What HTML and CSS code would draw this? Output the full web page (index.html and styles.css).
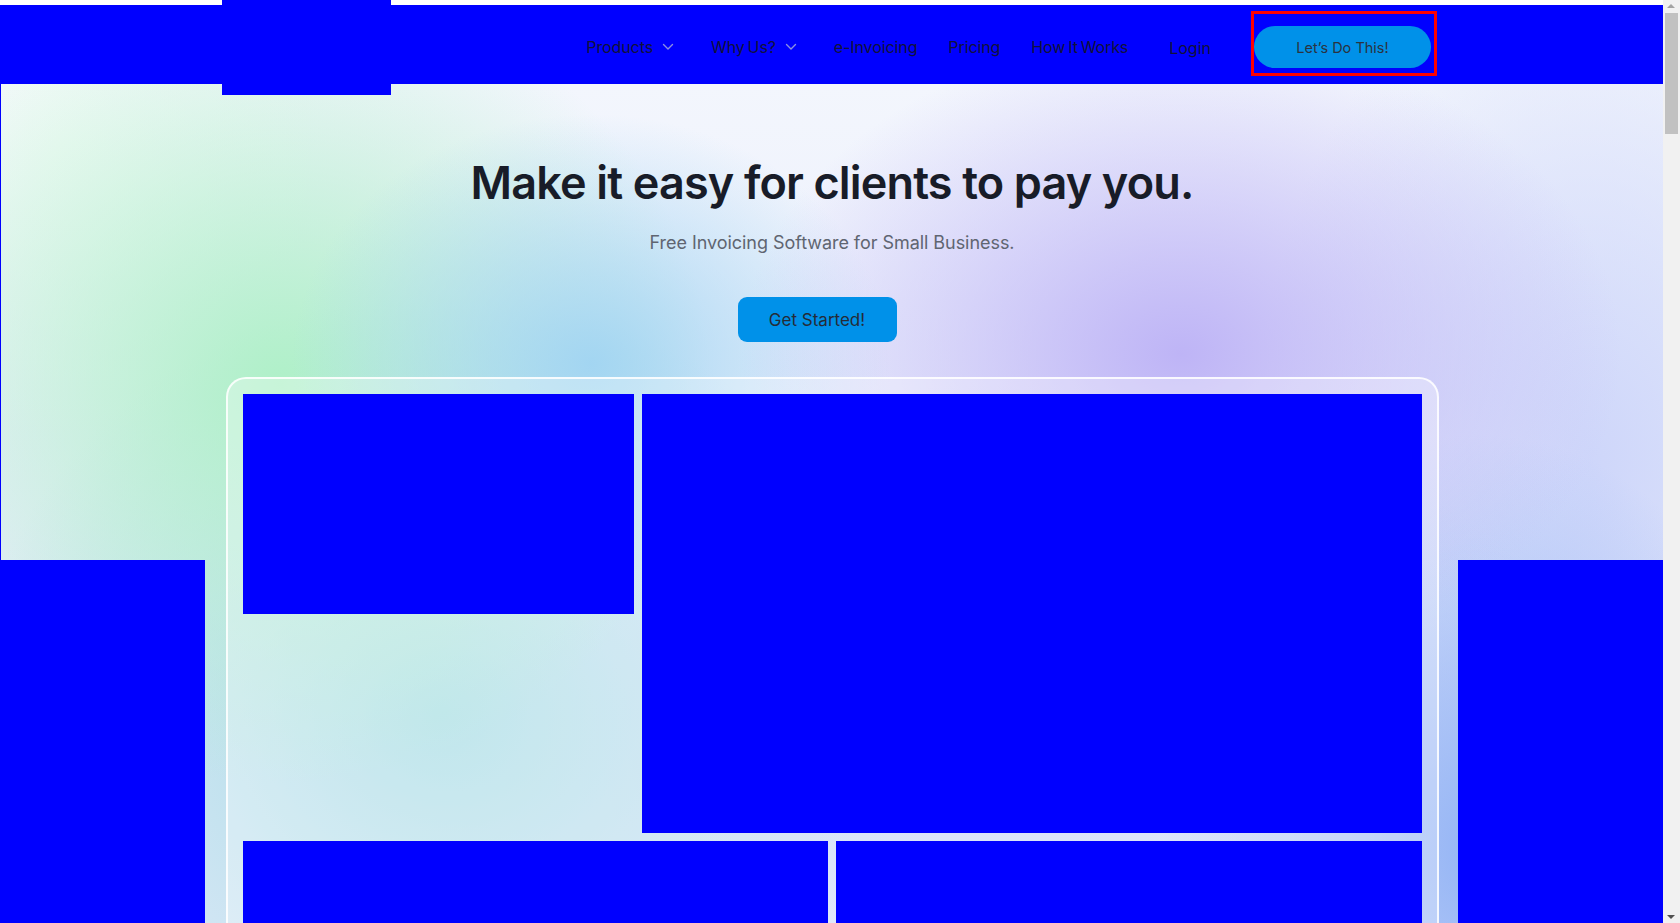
FILE: index.html
```html
<!DOCTYPE html>
<html lang="en">
<head>
<meta charset="utf-8">
<title>Free Invoicing Software for Small Business</title>
<link rel="stylesheet" href="styles.css">
</head>
<body>
<header class="topbar">
  <div class="topbar-inner">
    <a class="logo" href="#" aria-label="Home"></a>
    <nav class="nav">
      <ul class="menu">
        <li class="menu-item">Products
          <svg class="chev" viewBox="0 0 20 10" width="20" height="10" aria-hidden="true"><path d="M3.5 2.5 L8 7 L12.5 2.5" fill="none" stroke="currentColor" stroke-width="1.4" stroke-linecap="round" stroke-linejoin="round"/></svg>
        </li>
        <li class="menu-item">Why Us?
          <svg class="chev" viewBox="0 0 20 10" width="20" height="10" aria-hidden="true"><path d="M3.5 2.5 L8 7 L12.5 2.5" fill="none" stroke="currentColor" stroke-width="1.4" stroke-linecap="round" stroke-linejoin="round"/></svg>
        </li>
        <li class="menu-item">e-Invoicing</li>
        <li class="menu-item">Pricing</li>
        <li class="menu-item">How It Works</li>
      </ul>
      <a class="login" href="#">Login</a>
      <div class="cta-frame">
        <a class="cta" href="#">Let’s Do This!</a>
      </div>
    </nav>
  </div>
</header>

<main class="hero">
  <div class="side side-left"></div>
  <div class="side side-right"></div>

  <h1 class="hero-title">Make it easy for clients to pay you.</h1>
  <p class="hero-sub">Free Invoicing Software for Small Business.</p>
  <a class="hero-btn" href="#">Get Started!</a>

  <div class="showcase">
    <div class="show-row show-row-top">
      <div class="shot shot-small"></div>
      <div class="shot shot-large"></div>
    </div>
    <div class="show-row show-row-bottom">
      <div class="shot shot-half"></div>
      <div class="shot shot-half"></div>
    </div>
  </div>
</main>

<div class="scrollbar" aria-hidden="true">
  <span class="sb-arrow sb-up"></span>
  <span class="sb-thumb"></span>
  <span class="sb-arrow sb-down"></span>
</div>
</body>
</html>
```

FILE: styles.css
```css
* { box-sizing: border-box; }

html, body {
  margin: 0;
  padding: 0;
}

html {
  overflow-x: hidden;
  background: #ffffff;
}

body {
  width: 1663px;
  font-family: Inter, "Noto Sans", "Liberation Sans", sans-serif;
  color: #1a1d29;
  background: #ffffff;
  padding-top: 5px;
}

a { text-decoration: none; color: inherit; }

/* ---------- top bar ---------- */
.topbar {
  background: #0000ff;
  height: 79px;
}

.topbar-inner {
  position: relative;
  width: 1213px;
  height: 100%;
  margin: 0 auto;
  display: flex;
  justify-content: flex-end;
  align-items: center;
}

.logo {
  position: absolute;
  left: -3px;
  top: -5px;
  width: 169px;
  height: 95px;
  background: #0000ff;
  z-index: 3;
}

.nav {
  display: flex;
  align-items: center;
  margin-right: 1px;
}

.menu {
  list-style: none;
  margin: 0;
  padding: 0;
  display: flex;
  align-items: center;
  gap: 31px;
}

.menu-item {
  display: flex;
  align-items: center;
  font-size: 16px;
  color: #12123a;
  padding-top: 4px;
  letter-spacing: -0.1px;
  word-spacing: -1.5px;
}

.chev {
  margin-left: 7px;
  color: #8c8fe0;
  display: block;
}

.login {
  margin-left: 41px;
  font-size: 16px;
  color: #12123a;
  padding-top: 6px;
}

.cta-frame {
  margin-left: 40px;
  width: 186px;
  height: 65px;
  border: 3px solid #ff0000;
  padding: 12px 3px 5px 0;
  display: flex;
  margin-top: -2px;
}

.cta {
  flex: 1;
  display: flex;
  align-items: center;
  justify-content: center;
  height: 42px;
  border-radius: 21px;
  background: #0091e9;
  color: #2b3340;
  font-size: 14.5px;
}

/* ---------- hero ---------- */
.hero {
  position: relative;
  min-height: 1100px;
  padding-top: 70px;
  border-left: 1px solid #0000ff;
  text-align: center;
  overflow: hidden;
  background:
    radial-gradient(ellipse 440px 320px at 1180px 270px, rgba(190, 180, 246, 1), rgba(190, 180, 246, 0) 100%),
    radial-gradient(ellipse 300px 250px at 590px 280px, rgba(160, 212, 242, 0.95), rgba(160, 212, 242, 0) 100%),
    radial-gradient(ellipse 430px 400px at 280px 300px, rgba(175, 240, 200, 1), rgba(175, 240, 200, 0) 100%),
    radial-gradient(ellipse 470px 420px at 440px 630px, rgba(165, 220, 228, 1), rgba(165, 220, 228, 0) 100%),
    radial-gradient(ellipse 320px 420px at 1480px 770px, rgba(148, 180, 245, 1), rgba(148, 180, 245, 0) 100%),
    radial-gradient(ellipse 600px 360px at 1000px 660px, rgba(188, 204, 246, 0.85), rgba(188, 204, 246, 0) 100%),
    radial-gradient(ellipse 340px 520px at 1590px 380px, rgba(206, 214, 250, 1), rgba(206, 214, 250, 0) 100%),
    radial-gradient(ellipse 260px 300px at 60px 60px, rgba(240, 250, 246, 1), rgba(240, 250, 246, 0) 100%),
    linear-gradient(180deg, #f3f6fd 0px, #edf1fc 220px, #e2e9fa 700px);
}

.side {
  position: absolute;
  top: 476px;
  width: 205px;
  height: 700px;
  background: #0000ff;
}
.side-left { left: -1px; }
.side-right { right: 0; }

.hero-title {
  margin: 0;
  font-size: 45px;
  line-height: 58px;
  font-weight: 600;
  letter-spacing: -0.85px;
  color: #181c28;
}

.hero-sub {
  margin: 17px 0 0;
  font-size: 18px;
  line-height: 27px;
  color: #5f6571;
  letter-spacing: -0.05px;
}

.hero-btn {
  display: inline-flex;
  align-items: center;
  justify-content: center;
  margin-top: 41px;
  margin-right: 30px;
  width: 159px;
  height: 45px;
  border-radius: 9px;
  background: #0091e9;
  color: #252b36;
  font-size: 17px;
}

.showcase {
  position: relative;
  z-index: 1;
  width: 1213px;
  margin: 35px auto 0;
  padding: 15px;
  border: 2px solid rgba(255, 255, 255, 0.85);
  border-radius: 20px;
  background: rgba(255, 255, 255, 0.3);
  display: flex;
  flex-direction: column;
  gap: 8px;
}

.show-row {
  display: flex;
  gap: 8px;
  align-items: flex-start;
}

.shot { background: #0000ff; }

.shot-small { width: 391px; height: 220px; }
.shot-large { flex: 1; height: 439px; }
.shot-half { flex: 1; height: 300px; }

/* ---------- fake classic scrollbar (overlay) ---------- */
.scrollbar {
  position: fixed;
  top: 0;
  right: 0;
  width: 17px;
  height: 100vh;
  background: #f1f1f1;
  z-index: 10;
}

.sb-thumb {
  position: absolute;
  top: 13px;
  left: 2px;
  width: 13px;
  height: 121px;
  background: #c1c1c1;
}

.sb-arrow {
  position: absolute;
  left: 4px;
  width: 0;
  height: 0;
  border-left: 4.5px solid transparent;
  border-right: 4.5px solid transparent;
}

.sb-up {
  top: 4px;
  border-bottom: 4.5px solid #a3a3a3;
}

.sb-down {
  bottom: 4px;
  border-top: 4.5px solid #505050;
}
```
